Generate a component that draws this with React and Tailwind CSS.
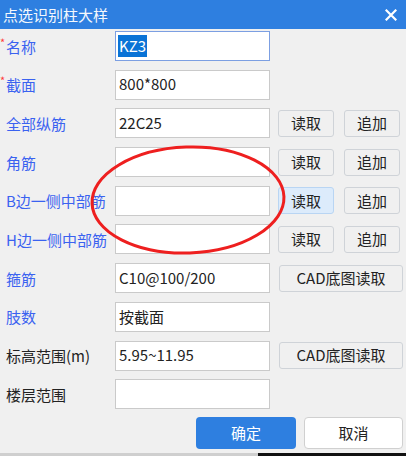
import React from "react";

const font = { fontFamily: '"Noto Sans CJK SC", "Noto Sans", sans-serif' };

function Btn({ children, w = "w-[56px]", active = false }) {
  return (
    <div
      className={`${w} h-[27px] flex items-center justify-center rounded-[3px] border text-[15px] text-[#222] ${
        active ? "bg-[#dcebfb] border-[#b9d5f3]" : "bg-[#f0f0f0] border-[#cfd3d8]"
      }`}
    >
      {children}
    </div>
  );
}

function Row({ label, star, blue = true, value = "", focus = false, selected = false, buttons }) {
  return (
    <div className="flex items-center h-[30px]">
      <div className={`w-[115px] flex items-center text-[15px] leading-none ${blue ? "text-[#3a62f0]" : "text-[#222]"}`}>
        {star ? <span className="text-[#ff3b3b] text-[11px] self-start mt-[-2px] w-[6px]">*</span> : <span className="w-[6px]" />}
        <span className={star ? "" : ""}>{label}</span>
      </div>
      <div
        className={`w-[155px] h-[30px] bg-white flex items-center px-[2px] text-[15px] text-[#222] ${
          focus ? "border-[1.5px] border-[#7c9fe2]" : "border-[1.5px] border-[#cacaca]"
        }`}
      >
        {selected ? (
          <span className="bg-[#0a73d6] text-white px-[1px] leading-[22px]">{value}</span>
        ) : (
          <span className="pl-[1px]">{value}</span>
        )}
      </div>
      {buttons}
    </div>
  );
}

function TwoBtns({ active }) {
  return (
    <div className="flex ml-[8px] gap-[10px]">
      <Btn active={active}>读取</Btn>
      <Btn>追加</Btn>
    </div>
  );
}

export default function App() {
  return (
    <div className="w-[406px] h-[456px] bg-[#f0f0f0] flex flex-col relative overflow-hidden" style={font}>
      <div className="h-[29px] bg-[#2e7fe0] flex items-center justify-between pl-[3px] pr-[8px] shrink-0">
        <span className="text-white text-[15px] leading-none opacity-95">点选识别柱大样</span>
        <svg width="12" height="12" viewBox="0 0 12 12" className="mr-[1px]">
          <path d="M1.5 1.5 L10.5 10.5 M10.5 1.5 L1.5 10.5" stroke="white" strokeWidth="2.2" strokeLinecap="square" />
        </svg>
      </div>
      <div className="flex flex-col gap-[8.7px] pt-[2px]">
        <Row label="名称" star value="KZ3" focus selected />
        <Row label="截面" star value="800*800" />
        <Row label="全部纵筋" value="22C25" buttons={<TwoBtns />} />
        <Row label="角筋" buttons={<TwoBtns />} />
        <Row label="B边一侧中部筋" buttons={<TwoBtns active />} />
        <Row label="H边一侧中部筋" buttons={<TwoBtns />} />
        <Row label="箍筋" value="C10@100/200" buttons={<div className="ml-[9px]"><Btn w="w-[124px]">CAD底图读取</Btn></div>} />
        <Row label="肢数" value="按截面" />
        <Row label="标高范围(m)" blue={false} value="5.95~11.95" buttons={<div className="ml-[9px]"><Btn w="w-[124px]">CAD底图读取</Btn></div>} />
        <Row label="楼层范围" blue={false} />
      </div>
      <div className="flex justify-end gap-[8px] pr-[3px] mt-[8px]">
        <div className="w-[100px] h-[32px] rounded-[4px] bg-[#2e7fe0] text-white text-[15px] flex items-center justify-center">确定</div>
        <div className="w-[99px] h-[32px] rounded-[4px] bg-white border border-[#d0d0d0] text-[#222] text-[15px] flex items-center justify-center">取消</div>
      </div>
      <div className="absolute left-0 right-0 bottom-0 h-[3px] flex">
        <div className="w-[258px] bg-[#cfcfcf]" />
        <div className="flex-1 bg-[#111]" />
      </div>
      <svg className="absolute left-0 top-0 pointer-events-none" width="406" height="456">
        <ellipse cx="188" cy="200" rx="96" ry="53" fill="none" stroke="#ee1f1f" strokeWidth="3" transform="rotate(-2 188 200)" />
      </svg>
    </div>
  );
}
